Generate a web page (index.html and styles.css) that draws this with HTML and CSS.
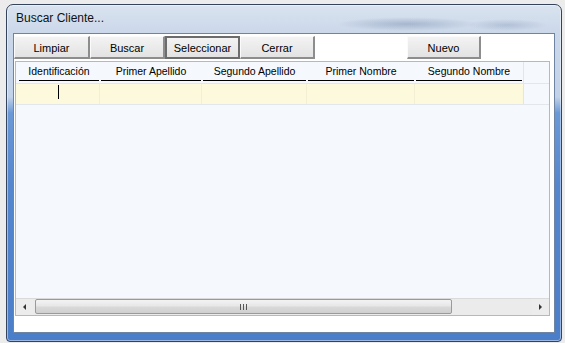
FILE: index.html
```html
<!DOCTYPE html>
<html>
<head>
<meta charset="utf-8">
<link rel="stylesheet" href="styles.css">
</head>
<body>
<div class="window">
  <div class="titlebar"><span class="title">Buscar Cliente...</span></div>
  <div class="client">
    <div class="toolbar">
      <div class="btn">Limpiar</div>
      <div class="btn">Buscar</div>
      <div class="btn btn-default">Seleccionar</div>
      <div class="btn">Cerrar</div>
      <div class="btn btn-new">Nuevo</div>
    </div>
    <div class="grid">
      <div class="grid-head">
        <div class="hcell c1"><span class="hlabel">Identificación</span></div>
        <div class="hcell c2"><span class="hlabel">Primer Apellido</span></div>
        <div class="hcell c3"><span class="hlabel">Segundo Apellido</span></div>
        <div class="hcell c4"><span class="hlabel">Primer Nombre</span></div>
        <div class="hcell c5"><span class="hlabel">Segundo Nombre</span></div>
        <div class="hcell filler"></div>
      </div>
      <div class="grid-row">
        <div class="cell c1"><span class="caret"></span></div>
        <div class="cell c2"></div>
        <div class="cell c3"></div>
        <div class="cell c4"></div>
        <div class="cell c5"></div>
        <div class="cell filler"></div>
      </div>
      <div class="grid-body"></div>
      <div class="hscroll">
        <div class="arrow-btn"><span class="tri-left"></span></div>
        <div class="track">
          <div class="thumb"><span class="grip"></span></div>
        </div>
        <div class="arrow-btn"><span class="tri-right"></span></div>
      </div>
    </div>
  </div>
</div>
</body>
</html>
```
FILE: styles.css
```css
* { box-sizing: border-box; }
html, body {
  margin: 0;
  padding: 0;
}
body {
  width: 565px;
  height: 343px;
  overflow: hidden;
  background: #ececec;
  font-family: "Liberation Sans", Arial, sans-serif;
  font-size: 11px;
  color: #000;
}
.window {
  margin: 4px 0 0 6px;
  width: 556px;
  height: 338px;
  border: 1px solid #33445c;
  border-radius: 7px 7px 4px 4px;
  padding: 0 6px 8px 6px;
  display: flex;
  flex-direction: column;
  background:
    radial-gradient(ellipse 70px 7px at 400px 19px, rgba(60, 85, 130, 0.28), rgba(60, 85, 130, 0) 100%),
    radial-gradient(ellipse 40px 6px at 500px 20px, rgba(60, 85, 130, 0.2), rgba(60, 85, 130, 0) 100%),
    linear-gradient(180deg, #d9e3ef 0, #cbd8ea 28px, #c2d2e8 92px, #6b99d7 108px, #5587cf 180px, #4b7ec8 100%);
  box-shadow: inset 0 0 0 1px rgba(255, 255, 255, 0.45);
}
.titlebar {
  height: 28px;
  display: flex;
  align-items: center;
  padding: 0 0 2px 3px;
}
.title {
  font-size: 12px;
  color: #111;
}
.client {
  flex: 1;
  background: #fff;
  border: 1px solid #6f84a3;
  display: flex;
  flex-direction: column;
}
.toolbar {
  display: flex;
  padding-top: 2px;
  height: 25px;
}
.btn {
  width: 75px;
  height: 23px;
  display: flex;
  align-items: center;
  justify-content: center;
  background: linear-gradient(#f3f3f3, #ebebeb 50%, #e2e2e2);
  border-top: 1px solid #fbfbfb;
  border-left: 1px solid #fbfbfb;
  border-right: 2px solid #8d8d8d;
  border-bottom: 2px solid #8d8d8d;
  padding-top: 1px;
}
.btn:first-child { width: 76px; }
.btn-default {
  border: 2px solid #6c6c6c;
  padding-top: 0;
}
.btn-new {
  margin-left: 92px;
  width: 74px;
}
.grid {
  margin: 2px 4px 16px 1px;
  flex: 1;
  border: 1px solid #b4b9c0;
  background: #f5f8fc;
  display: flex;
  flex-direction: column;
}
.grid-head, .grid-row {
  display: flex;
}
.grid-head { height: 21px; font-size: 10.5px; }
.c1 { width: 84px; }
.c2 { width: 102px; }
.c3 { width: 105px; }
.c4 { width: 108px; }
.c5 { width: 108px; }
.filler { flex: 1; }
.hcell {
  padding: 0 1px 0 1px;
}
.hcell.c1 { padding-left: 3px; }
.hcell.filler { border-left: 1px solid #e2e5ea; }
.hlabel {
  display: flex;
  justify-content: center;
  align-items: center;
  height: 19px;
  padding-bottom: 1px;
  border-bottom: 1px solid #000;
}
.grid-row {
  height: 22px;
  border-top: 1px solid #e3e6eb;
  border-bottom: 1px solid #e3e6eb;
}
.cell {
  background: #fcf9dc;
  border-right: 1px solid #f2efd4;
  position: relative;
}
.cell.filler {
  background: transparent;
  border-right: none;
  border-left: 1px solid #e2e5ea;
}
.cell.c5 { border-right: none; }
.caret {
  position: absolute;
  left: 42px;
  top: 1px;
  width: 1px;
  height: 14px;
  background: #000;
}
.grid-body { flex: 1; }
.hscroll {
  height: 17px;
  display: flex;
  background: #ebebeb;
  border-top: 1px solid #dadada;
}
.arrow-btn {
  width: 17px;
  display: flex;
  align-items: center;
  justify-content: center;
  background: #ececec;
}
.tri-left {
  width: 0; height: 0;
  border-top: 3px solid transparent;
  border-bottom: 3px solid transparent;
  border-right: 3px solid #333;
}
.tri-right {
  width: 0; height: 0;
  border-top: 3px solid transparent;
  border-bottom: 3px solid transparent;
  border-left: 3px solid #333;
}
.track {
  flex: 1;
  padding: 0 80px 1px 2px;
  display: flex;
}
.thumb {
  flex: 1;
  border: 1px solid #9a9a9a;
  border-radius: 2px;
  background: linear-gradient(#f3f3f3, #e7e7e7 45%, #d9d9d9 55%, #cfcfcf);
  display: flex;
  align-items: center;
  justify-content: center;
}
.grip {
  width: 7px;
  height: 6px;
  background: repeating-linear-gradient(90deg, #555 0 1px, transparent 1px 3px);
}
```
